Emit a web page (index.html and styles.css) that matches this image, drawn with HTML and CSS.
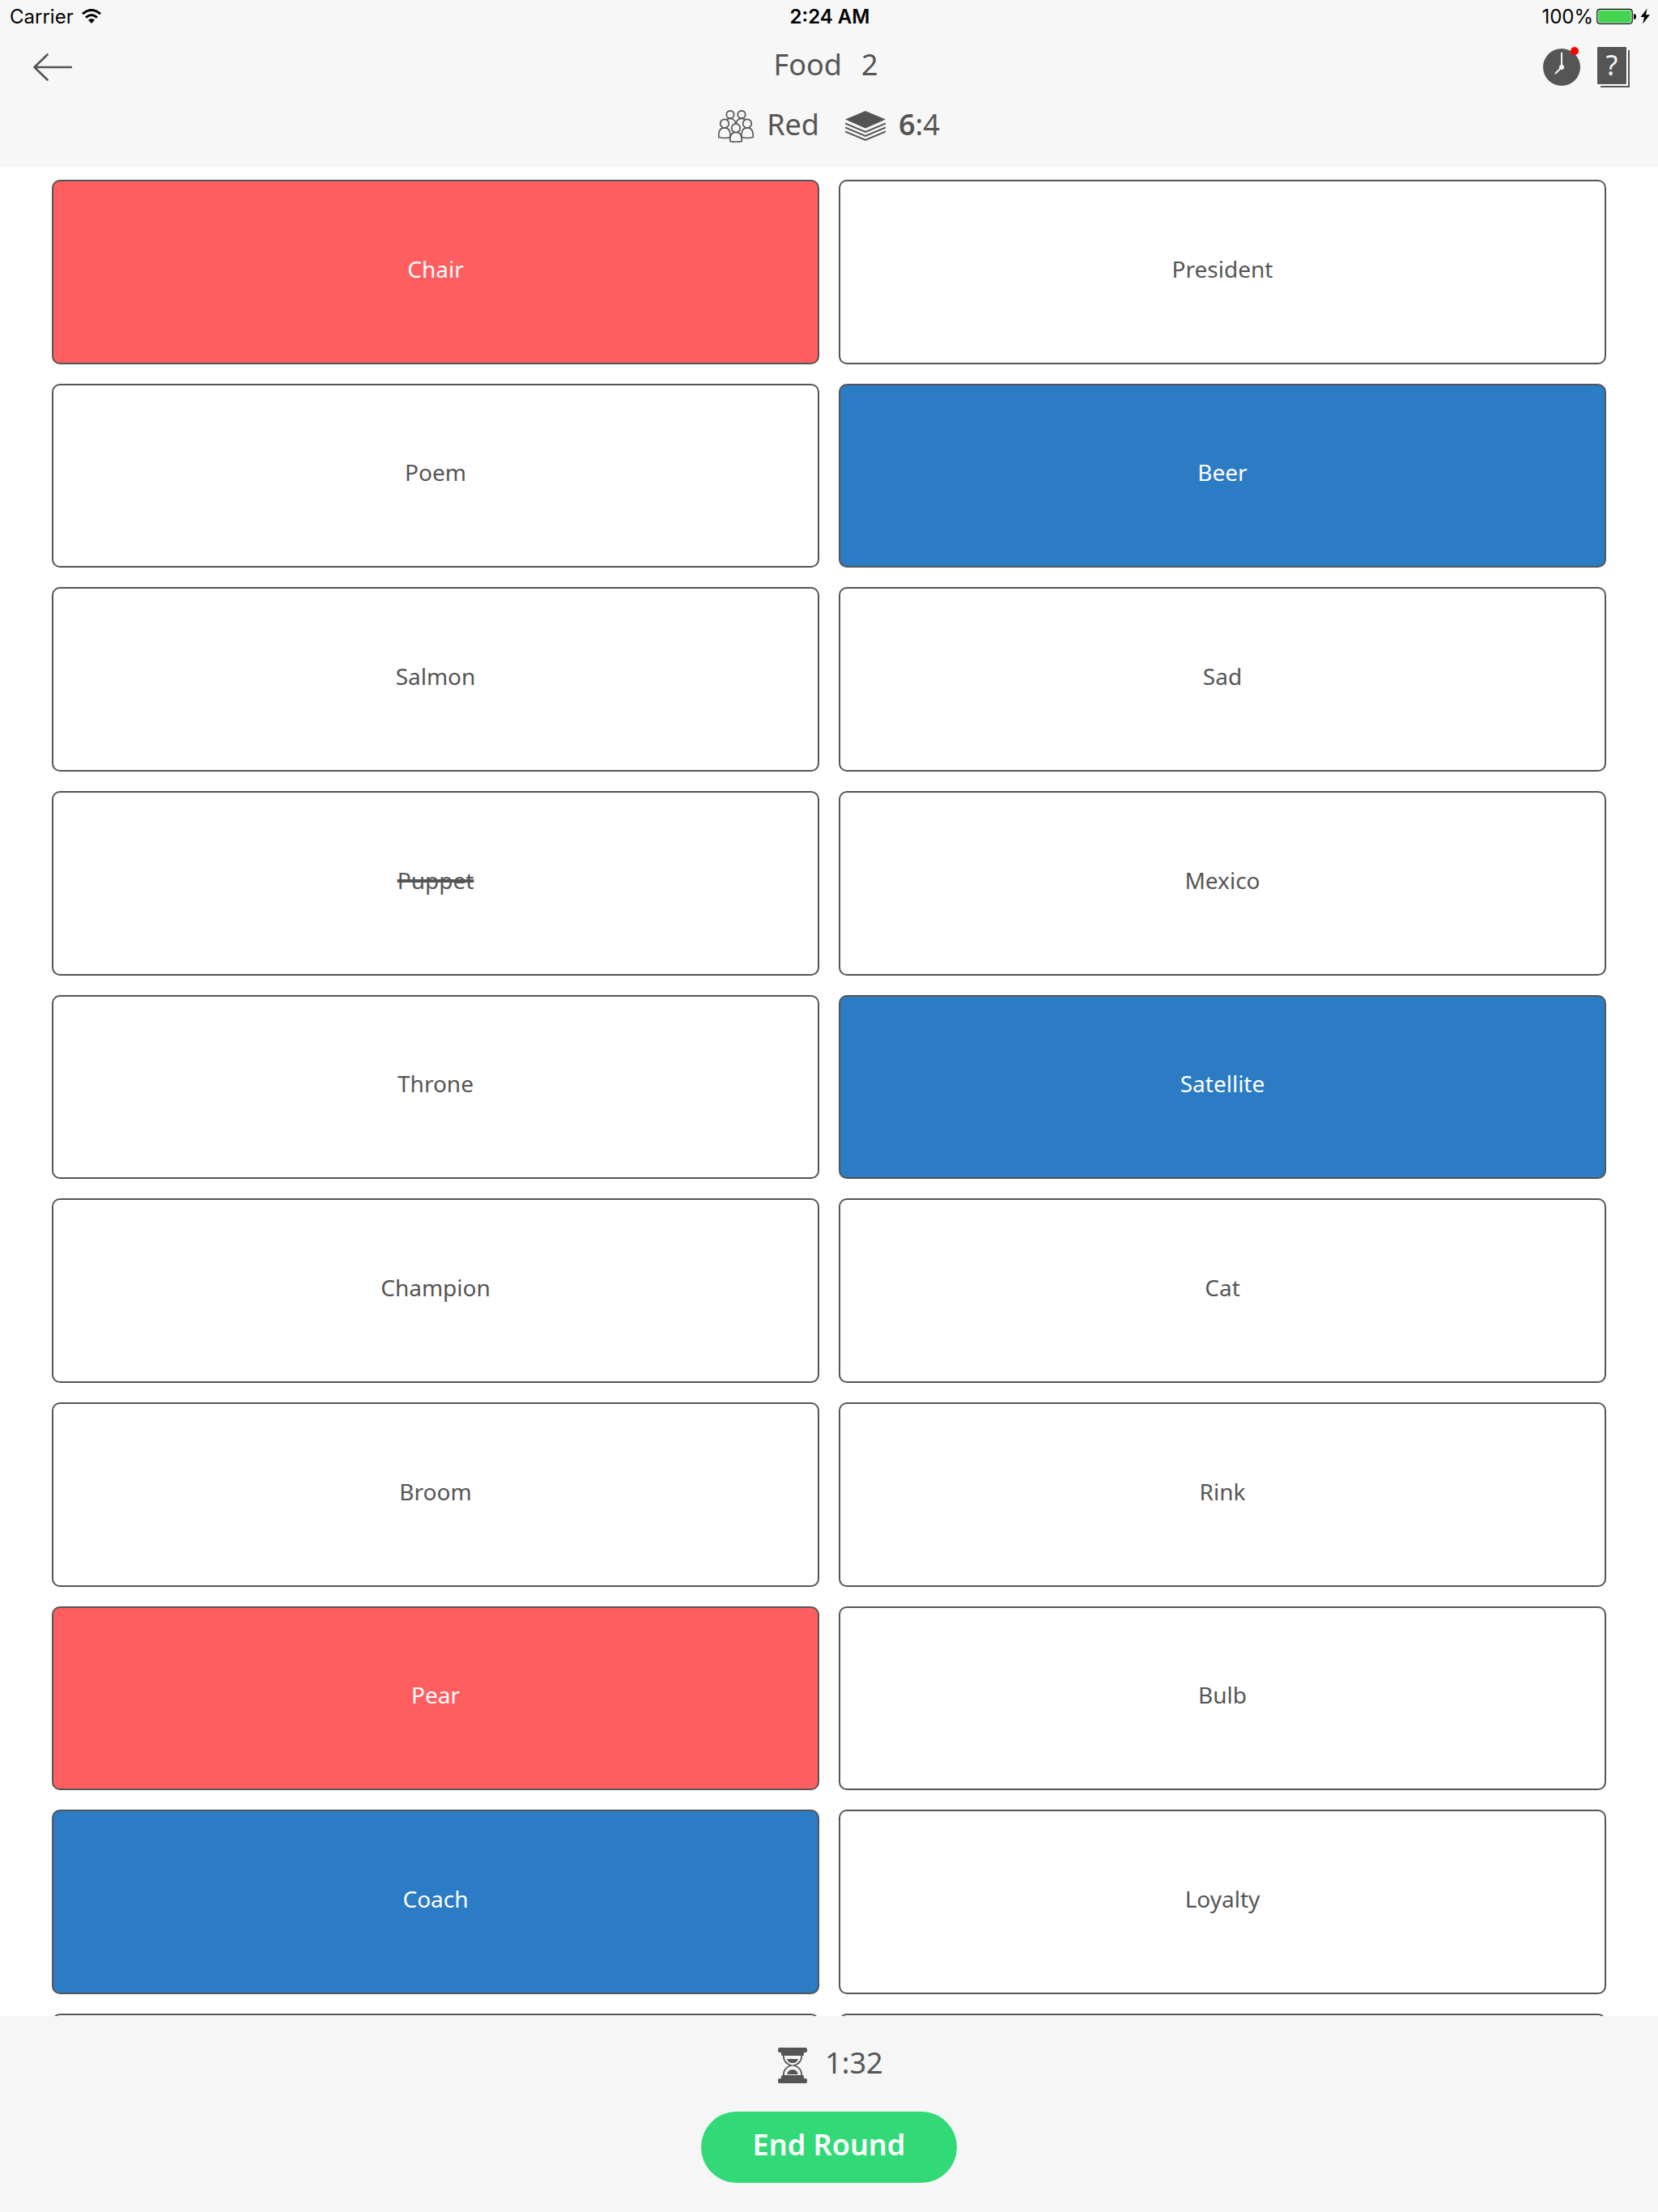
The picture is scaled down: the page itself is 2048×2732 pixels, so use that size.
FILE: index.html
```html
<!DOCTYPE html>
<html lang="en">
<head>
<meta charset="utf-8">
<meta name="viewport" content="width=device-width, initial-scale=1">
<title>Food</title>
<link rel="stylesheet" href="styles.css">
</head>
<body>
<header class="header">
  <div class="status">
    <div class="status-side">
      <span>Carrier</span>
      <svg width="24" height="18" viewBox="0 0 24 18" aria-hidden="true">
        <path d="M1 6.2Q12-3.4 23 6.2" fill="none" stroke="#000" stroke-width="3"/>
        <path d="M5 10.6Q12 4.4 19 10.6" fill="none" stroke="#000" stroke-width="3"/>
        <path d="M8 13.6Q12 10.6 16 13.6L12 18Z"/>
      </svg>
    </div>
    <span class="status-time">2:24 AM</span>
    <div class="status-side status-right">
      <span>100%</span>
      <svg width="66" height="20" viewBox="0 0 66 20" aria-hidden="true">
        <rect x=".8" y="1.3" width="43.4" height="18" rx="3.5" fill="#fff" stroke="#000" stroke-width="1.2"/>
        <rect x="2.2" y="2.7" width="40.600" height="15.2" rx="2" fill="#43d551"/>
        <path d="M46 7q3 0 3 3.500t-3 3.500z"/>
        <path d="M62.500 0.500L54.500 11h4.600L57 19.500l9-11.200h-5z"/>
      </svg>
    </div>
  </div>
  <div class="nav">
    <button class="icon-button" aria-label="Back">
      <svg width="54" height="34" viewBox="-6 0 54 34" aria-hidden="true">
        <path d="M47 17H1.500M17.500 1.500L1.500 17L17.500 32.500" fill="none" stroke="#555" stroke-width="2.600" stroke-linecap="round" stroke-linejoin="round"/>
      </svg>
    </button>
    <h1 class="title"><span>Food</span><span>2</span></h1>
    <div class="nav-actions">
      <button class="icon-button" aria-label="History">
        <svg width="46" height="50" viewBox="0 0 46 50" aria-hidden="true">
          <circle cx="23" cy="25" r="23" fill="#555"/>
          <path d="M23 25V7.500M23 25L15.500 32.500" stroke="#f7f7f7" stroke-width="2" stroke-linecap="round"/>
          <circle cx="23" cy="25" r="3" fill="#f7f7f7"/>
          <circle cx="39" cy="5" r="5" fill="#f00"/>
        </svg>
      </button>
      <button class="icon-button" aria-label="Help">
        <svg width="40" height="50" viewBox="0 0 40 50" aria-hidden="true">
          <rect width="36" height="46" rx="1" fill="#555"/>
          <path d="M39 4V49H4" fill="none" stroke="#555" stroke-width="2"/>
          <path d="M37 4V45Q37 47 35 47H4" fill="none" stroke="#fff" stroke-width="2"/>
          <text x="18" y="35" class="help-mark">?</text>
        </svg>
      </button>
    </div>
  </div>
  <div class="score">
    <div class="score-item">
      <svg width="44" height="40" viewBox="0 0 44 40" fill="#f7f7f7" stroke="#555" stroke-width="1.700" aria-hidden="true">
        <path d="M6.500 21C6.500 14 9.500 10.500 15 10.500S22 14 22 21M22 21C22 14 23.500 10.500 29 10.500S37.500 14 37.500 21" fill="none"/>
        <circle cx="15" cy="5.500" r="4.700"/><circle cx="29" cy="5.500" r="4.700"/>
        <path d="M.8 33.500C.3 25 3 21.800 8 21.800S15.500 25 15 33.500Q8 35.500 .8 33.500ZM29 33.500C28.500 25 31 21.800 36 21.800S43.700 25 43.200 33.500Q36 35.500 29 33.500Z"/>
        <circle cx="8" cy="16.700" r="5.300"/><circle cx="36" cy="16.700" r="5.300"/>
        <path d="M14.800 38.500C14.300 30.500 17 27.300 22 27.300S29.700 30.500 29.200 38.500Q22 40 14.800 38.500Z"/>
        <circle cx="22" cy="22.200" r="5.300"/>
      </svg>
      <span class="score-text">Red</span>
    </div>
    <div class="score-item">
      <svg width="50" height="38" viewBox="0 0 50 38" aria-hidden="true">
        <path d="M25 0L50 10.500L25 21.500L0 10.500Z" fill="#555"/>
        <path d="M0 15.500L25 26L50 15.500M0 20.500L25 31L50 20.500M0 25.500L25 36L50 25.500" fill="none" stroke="#555" stroke-width="2"/>
      </svg>
      <span class="score-text"><strong>6</strong>:4</span>
    </div>
  </div>
</header>
<main class="board">
  <button class="card card-red">Chair</button>
  <button class="card">President</button>
  <button class="card">Poem</button>
  <button class="card card-blue">Beer</button>
  <button class="card">Salmon</button>
  <button class="card">Sad</button>
  <button class="card"><s>Puppet</s></button>
  <button class="card">Mexico</button>
  <button class="card">Throne</button>
  <button class="card card-blue">Satellite</button>
  <button class="card">Champion</button>
  <button class="card">Cat</button>
  <button class="card">Broom</button>
  <button class="card">Rink</button>
  <button class="card card-red">Pear</button>
  <button class="card">Bulb</button>
  <button class="card card-blue">Coach</button>
  <button class="card">Loyalty</button>
  <div class="card"></div>
  <div class="card"></div>
</main>
<footer class="footer">
  <div class="timer">
    <svg width="40" height="44" viewBox="-4 0 40 44" aria-hidden="true">
      <path d="M2 0H34Q36 0 36 2V4Q36 6 34 6H32V8.500Q32 10 30.500 10H5.500Q4 10 4 8.500V6H2Q0 6 0 4V2Q0 0 2 0ZM2 44H34Q36 44 36 42V40Q36 38 34 38H32V35.500Q32 34 30.500 34H5.500Q4 34 4 35.500V38H2Q0 38 0 40V42Q0 44 2 44Z" fill="#555"/>
      <path d="M6.800 9C6.500 16 9 20 16.500 22C9 24 6.500 28 6.800 35M29.200 9C29.500 16 27 20 19.500 22C27 24 29.500 28 29.200 35" fill="none" stroke="#555" stroke-width="1.800"/>
      <path d="M11 14H25Q23.500 19 18 19T11 14ZM11 33Q12.500 27 18 27T25 33Z" fill="#555"/>
    </svg>
    <span class="timer-text">1:32</span>
  </div>
  <button class="end-round">End Round</button>
</footer>
</body>
</html>
```
FILE: styles.css
```css
* {
  box-sizing: border-box;
}

body {
  margin: 0;
  height: 100vh;
  display: flex;
  flex-direction: column;
  background: #fff;
  color: #555;
  font-family: "Noto Sans", sans-serif;
  font-size: 36px;
}

button {
  font: inherit;
  color: inherit;
  cursor: pointer;
}

svg {
  display: block;
  flex: none;
}

.header {
  flex: none;
  padding-bottom: 20px;
  background: #f7f7f7;
}

.status {
  height: 40px;
  padding: 0 10px 0 12px;
  display: grid;
  grid-template-columns: 1fr auto 1fr;
  align-items: center;
  color: #000;
  font-family: Inter, sans-serif;
  font-size: 24px;
}

.status-side {
  display: flex;
  align-items: center;
  gap: 10px;
}

.status-right {
  justify-content: flex-end;
  gap: 4px;
}

.status-time {
  font-weight: 600;
}

.nav {
  height: 86px;
  padding: 0 35px;
  display: grid;
  grid-template-columns: 1fr auto 1fr;
  align-items: center;
}

.icon-button {
  padding: 0;
  border: 0;
  background: none;
  justify-self: start;
}

.title {
  margin: 0;
  padding: 0 8px 8px 0;
  display: flex;
  gap: 24px;
  font-size: 36px;
  font-weight: 400;
}

.nav-actions {
  display: flex;
  justify-content: flex-end;
  gap: 21px;
}

.help-mark {
  fill: #f7f7f7;
  font-size: 34px;
  text-anchor: middle;
}

.score {
  height: 60px;
  display: flex;
  align-items: center;
  justify-content: center;
  gap: 32px;
}

.score-item {
  display: flex;
  align-items: center;
  gap: 16px;
}

.score-text {
  padding-bottom: 6px;
}

.score-text strong {
  font-weight: 600;
}

.board {
  flex: 1;
  min-height: 0;
  overflow: hidden;
  padding: 16px 64px 0;
  display: grid;
  grid-template-columns: 1fr 1fr;
  grid-auto-rows: calc(100vh / 12);
  gap: 24px;
}

.card {
  padding: 0 0 8px;
  border: 2px solid #555;
  border-radius: 10px;
  background: #fff;
  font-size: 28px;
}

.card s {
  text-decoration-thickness: 4px;
}

.card-red {
  background: #fe5e60;
  color: #fff;
}

.card-blue {
  background: #2b7cc4;
  color: #fff;
}

.footer {
  flex: none;
  padding: 39px 0 36px;
  display: flex;
  flex-direction: column;
  align-items: center;
  gap: 35px;
  background: #f6f6f6;
}

.timer {
  height: 44px;
  display: flex;
  align-items: center;
  gap: 22px;
}

.timer-text {
  padding-bottom: 8px;
}

.end-round {
  height: 88px;
  padding: 0 64px 8px;
  border: 0;
  border-radius: 44px;
  background: #31da77;
  color: #fff;
  font-size: 36px;
  font-weight: 600;
}
```
